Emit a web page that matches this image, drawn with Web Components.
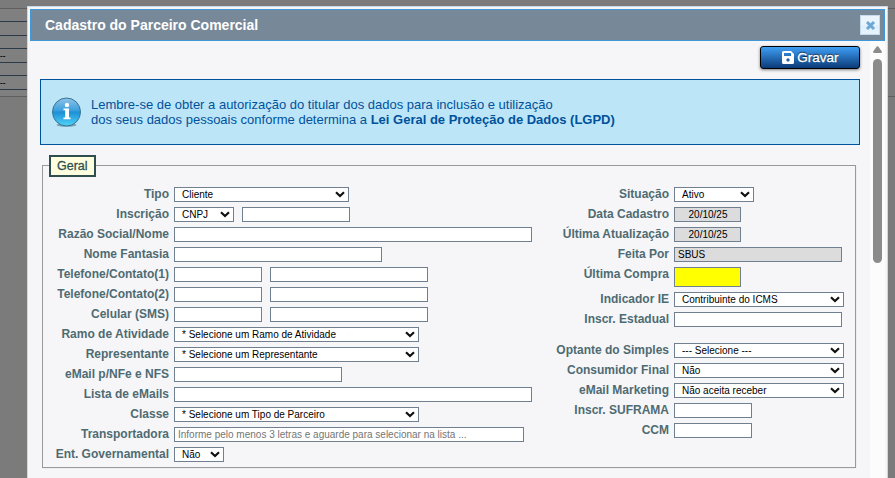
<!DOCTYPE html>
<html lang="pt-BR">
<head>
<meta charset="utf-8">
<title>Cadastro do Parceiro Comercial</title>
<style>
  body {
    margin: 0;
    height: 478px;
    overflow: hidden;
    font-family: "Liberation Sans", Arial, sans-serif;
    background: #7b7b7b;
  }
</style>
</head>
<body>
<script>
/********************************* PageBackdrop ******************************************/
const backdropTemplate = document.createElement('template');
backdropTemplate.innerHTML = `
  <style>
    :host { display: block; position: relative; height: 478px; overflow: hidden; background: #7b7b7b; }
    .rows { padding-top: 8px; }
    .row { box-sizing: border-box; width: 27px; border-top: 1px solid #2b3a46; background: #808080; color: #000; font-size: 8px; font-weight: bold; line-height: 13px; }
    .edge { width: auto; border-color: #5f5f5f; }
    .first { background: linear-gradient(90deg, #808080 27px, #7b7b7b 27px); }
    .last { background: none; }
    ::slotted(*) { position: absolute; left: 27px; top: 6px; }
  </style>
  <div class="rows">
    <div class="row edge first" style="height:13px"></div>
    <div class="row" style="height:14px"></div>
    <div class="row" style="height:13px"></div>
    <div class="row" style="height:14px">--</div>
    <div class="row" style="height:13px"></div>
    <div class="row" style="height:14px">--</div>
    <div class="row" style="height:7px"></div>
    <div class="row edge last" style="height:4px"></div>
  </div>
  <slot></slot>`;
class PageBackdrop extends HTMLElement {
  constructor() {
    super();
    this.attachShadow({ mode: 'open' });
    this.shadowRoot.appendChild(backdropTemplate.content.cloneNode(true));
  }
}
customElements.define('page-backdrop', PageBackdrop);

/********************************* ModalDialog ******************************************/
const dialogTemplate = document.createElement('template');
dialogTemplate.innerHTML = `
  <style>
    :host { display: flex; flex-direction: column; box-sizing: border-box; width: 861px; height: 490px; padding: 2px; border: 1px solid #c5dbec; background: #f6f6f8; }
    header { display: flex; align-items: center; justify-content: space-between; box-sizing: border-box; flex: none; height: 32px; padding: 0 4px 0 14px; border: 1px solid #4297d7; background: #778899; }
    .title { color: #fff; font-size: 14px; font-weight: bold; white-space: nowrap; line-height: 30px; }
    .close { display: flex; box-sizing: border-box; width: 20px; height: 20px; border: 1px solid #c5dbec; background: linear-gradient(#eaf4fd 50%, #dfeffc 50%, #e6f3fc); }
    main { display: flex; flex: 1; min-height: 0; }
    .content { box-sizing: border-box; width: 840px; padding: 5px 10px 0; }
    .bar { display: flex; flex-direction: column; align-items: center; width: 15px; padding-top: 5px; box-sizing: border-box; background: #fcfcfc; }
    .thumb { width: 9px; height: 204px; margin-top: 6px; border-radius: 5px; background: #8b8b8b; }
  </style>
  <header>
    <span class="title"></span>
    <span class="close">
      <svg width="18" height="18" viewBox="0 0 18 18"><path d="M6 6L13 13M13 6L6 13" stroke="#6da8d5" stroke-width="3"/></svg>
    </span>
  </header>
  <main>
    <div class="content"><slot></slot></div>
    <div class="bar">
      <svg width="9" height="7" viewBox="0 0 9 7"><path d="M3.700 .6Q4.500-.3 5.300.6L8.800 5.500Q9 7 8 7H1Q0 7 .2 5.500Z" fill="#8b8b8b"/></svg>
      <div class="thumb"></div>
    </div>
  </main>`;
class ModalDialog extends HTMLElement {
  constructor() {
    super();
    this.attachShadow({ mode: 'open' });
    this.shadowRoot.appendChild(dialogTemplate.content.cloneNode(true));
  }

  connectedCallback() {
    this.shadowRoot.querySelector('.title').textContent = this.getAttribute('heading');
  }
}
customElements.define('modal-dialog', ModalDialog);

/********************************* SaveButton ******************************************/
const saveTemplate = document.createElement('template');
saveTemplate.innerHTML = `
  <style>
    :host { display: flex; justify-content: flex-end; }
    button { display: flex; align-items: center; justify-content: center; gap: 4px; box-sizing: border-box; width: 100px; height: 23px; padding: 0; border: 1px solid #000; border-radius: 3px; background: linear-gradient(#3f9ff5, #0a3a78); box-shadow: 0 1px 3px rgba(0, 0, 0, .5); color: #fff; font: 13.500px/20px "Liberation Sans", Arial, sans-serif; -webkit-text-stroke: .3px #fff; text-shadow: 0 -1px 1px rgba(0, 0, 0, .8); }
    svg { display: block; margin: -1px -1px 0 1px; }
  </style>
  <button>
    <svg width="12" height="13" viewBox="0 0 12 13"><path fill="#fff" fill-rule="evenodd" d="M1.500 0H9L12 3V11.500Q12 13 10.500 13H1.500Q0 13 0 11.500V1.500Q0 0 1.500 0ZM2 2V5H9V2ZM6 7.200A1.700 1.700 0 1 0 6 10.600A1.700 1.700 0 1 0 6 7.200Z"/></svg>
    <span><slot></slot></span>
  </button>`;
class SaveButton extends HTMLElement {
  constructor() {
    super();
    this.attachShadow({ mode: 'open' });
    this.shadowRoot.appendChild(saveTemplate.content.cloneNode(true));
  }
}
customElements.define('save-button', SaveButton);

/********************************* InfoBox ******************************************/
const infoTemplate = document.createElement('template');
infoTemplate.innerHTML = `
  <style>
    :host { display: flex; align-items: center; gap: 9px; box-sizing: border-box; height: 66px; margin-top: 10px; padding: 0 11px; border: 1px solid #00529b; background: #bde5f8; color: #00529b; font-size: 13px; line-height: 15px; white-space: nowrap; }
    svg { flex: none; }
  </style>
  <svg width="30" height="30" viewBox="0 0 30 30">
    <defs>
      <linearGradient id="ball" x2="0" y2="1"><stop stop-color="#8fc4ea"/><stop offset=".45" stop-color="#3a9fdc"/><stop offset=".5" stop-color="#1e8fd6"/><stop offset="1" stop-color="#4fd4f8"/></linearGradient>
    </defs>
    <ellipse cx="14.500" cy="28" rx="10" ry="1.800" fill="#5f8596" opacity=".7"/>
    <circle cx="14.500" cy="15" r="14" fill="url(#ball)" stroke="#36758f"/>
    <circle cx="15" cy="8" r="2.200" fill="#fff"/>
    <path d="M11.500 11.500H17V20.500H18.500V22.300H11.500V20.500H13.200V13.200H11.500Z" fill="#fff"/>
  </svg>
  <div><slot></slot></div>`;
class InfoBox extends HTMLElement {
  constructor() {
    super();
    this.attachShadow({ mode: 'open' });
    this.shadowRoot.appendChild(infoTemplate.content.cloneNode(true));
  }
}
customElements.define('info-box', InfoBox);

/********************************* FieldGroup ******************************************/
const groupTemplate = document.createElement('template');
groupTemplate.innerHTML = `
  <style>
    :host { display: block; margin: 10px 4px 0 2px; }
    fieldset { box-sizing: border-box; height: 313px; margin: 0; padding: 0 0 0 6px; border: 1px solid #999; box-shadow: 1px 1px #eee; }
    legend { box-sizing: border-box; width: 47px; height: 21.5px; padding: 0 0 0 6px; border: 2px solid #2f4f4f; background: #ffffe0; color: #2f4f4f; font-size: 12.500px; line-height: 18px; white-space: nowrap; -webkit-text-stroke: .3px; }
    .columns { display: grid; grid-template-columns: 500px 1fr; margin-left: -1px; padding-top: 8.5px; }
  </style>
  <fieldset>
    <legend></legend>
    <div class="columns"><slot></slot></div>
  </fieldset>`;
class FieldGroup extends HTMLElement {
  constructor() {
    super();
    this.attachShadow({ mode: 'open' });
    this.shadowRoot.appendChild(groupTemplate.content.cloneNode(true));
  }

  connectedCallback() {
    this.shadowRoot.querySelector('legend').textContent = this.getAttribute('legend');
  }
}
customElements.define('field-group', FieldGroup);

/********************************* FieldRow ******************************************/
const rowTemplate = document.createElement('template');
rowTemplate.innerHTML = `
  <style>
    :host { display: flex; height: 20px; }
    :host([tall]) { height: 25px; }
    :host([spaced]) { margin-top: 11px; }
    label { width: 121px; margin-right: 5px; color: #4f6b72; font-size: 12px; font-weight: bold; line-height: 18px; text-align: right; white-space: nowrap; }
    .fields { display: flex; align-items: flex-start; gap: 8px; padding-top: 2px; }
  </style>
  <label></label>
  <div class="fields"><slot></slot></div>`;
class FieldRow extends HTMLElement {
  constructor() {
    super();
    this.attachShadow({ mode: 'open' });
    this.shadowRoot.appendChild(rowTemplate.content.cloneNode(true));
  }

  connectedCallback() {
    this.shadowRoot.querySelector('label').textContent = this.getAttribute('label');
  }
}
customElements.define('field-row', FieldRow);

/********************************* TextField ******************************************/
const textTemplate = document.createElement('template');
textTemplate.innerHTML = `
  <style>
    :host { display: block; box-sizing: border-box; height: 15px; padding-left: 3px; border: 1px solid #708090; background: #fff; color: #000; font-size: 10px; line-height: 14px; white-space: nowrap; }
    :host([hint]) { color: #757575; }
    :host([readonly]) { background: #dcdcdc; }
    :host([centered]) { padding-left: 1px; text-align: center; }
    :host([warn]) { height: 20px; background: #ff0; }
  </style>
  <slot></slot>`;
class TextField extends HTMLElement {
  constructor() {
    super();
    this.attachShadow({ mode: 'open' });
    this.shadowRoot.appendChild(textTemplate.content.cloneNode(true));
  }

  connectedCallback() {
    this.style.width = this.getAttribute('width') + 'px';
  }
}
customElements.define('text-field', TextField);

/********************************* SelectField ******************************************/
const selectTemplate = document.createElement('template');
selectTemplate.innerHTML = `
  <style>
    :host { display: flex; justify-content: space-between; box-sizing: border-box; height: 15px; padding: 0 3px 0 7px; border: 1px solid #708090; background: #fff; color: #000; font-size: 10px; line-height: 14px; white-space: nowrap; }
    svg { margin-top: 3px; }
  </style>
  <span><slot></slot></span>
  <svg width="10" height="7" viewBox="0 0 10 7"><path d="M1 1.300L5 5L9 1.300" fill="none" stroke="#101010" stroke-width="2.200"/></svg>`;
class SelectField extends HTMLElement {
  constructor() {
    super();
    this.attachShadow({ mode: 'open' });
    this.shadowRoot.appendChild(selectTemplate.content.cloneNode(true));
  }

  connectedCallback() {
    this.style.width = this.getAttribute('width') + 'px';
  }
}
customElements.define('select-field', SelectField);
</script>

<page-backdrop>
  <modal-dialog heading="Cadastro do Parceiro Comercial">
    <save-button>Gravar</save-button>
    <info-box>Lembre-se de obter a autorização do titular dos dados para inclusão e utilização<br>dos seus dados pessoais conforme determina a <b>Lei Geral de Proteção de Dados (LGPD)</b></info-box>
    <field-group legend="Geral">
      <div>
        <field-row label="Tipo"><select-field width="175">Cliente</select-field></field-row>
        <field-row label="Inscrição"><select-field width="60">CNPJ</select-field><text-field width="108"></text-field></field-row>
        <field-row label="Razão Social/Nome"><text-field width="358"></text-field></field-row>
        <field-row label="Nome Fantasia"><text-field width="208"></text-field></field-row>
        <field-row label="Telefone/Contato(1)"><text-field width="88"></text-field><text-field width="158"></text-field></field-row>
        <field-row label="Telefone/Contato(2)"><text-field width="88"></text-field><text-field width="158"></text-field></field-row>
        <field-row label="Celular (SMS)"><text-field width="88"></text-field><text-field width="158"></text-field></field-row>
        <field-row label="Ramo de Atividade"><select-field width="245">* Selecione um Ramo de Atividade</select-field></field-row>
        <field-row label="Representante"><select-field width="245">* Selecione um Representante</select-field></field-row>
        <field-row label="eMail p/NFe e NFS"><text-field width="168"></text-field></field-row>
        <field-row label="Lista de eMails"><text-field width="358"></text-field></field-row>
        <field-row label="Classe"><select-field width="245">* Selecione um Tipo de Parceiro</select-field></field-row>
        <field-row label="Transportadora"><text-field width="350" hint>Informe pelo menos 3 letras e aguarde para selecionar na lista ...</text-field></field-row>
        <field-row label="Ent. Governamental"><select-field width="50">Não</select-field></field-row>
      </div>
      <div>
        <field-row label="Situação"><select-field width="80">Ativo</select-field></field-row>
        <field-row label="Data Cadastro"><text-field width="67" readonly centered>20/10/25</text-field></field-row>
        <field-row label="Última Atualização"><text-field width="67" readonly centered>20/10/25</text-field></field-row>
        <field-row label="Feita Por"><text-field width="168" readonly>SBUS</text-field></field-row>
        <field-row label="Última Compra" tall><text-field width="67" warn></text-field></field-row>
        <field-row label="Indicador IE"><select-field width="170">Contribuinte do ICMS</select-field></field-row>
        <field-row label="Inscr. Estadual"><text-field width="168"></text-field></field-row>
        <field-row label="Optante do Simples" spaced><select-field width="170">--- Selecione ---</select-field></field-row>
        <field-row label="Consumidor Final"><select-field width="170">Não</select-field></field-row>
        <field-row label="eMail Marketing"><select-field width="170">Não aceita receber</select-field></field-row>
        <field-row label="Inscr. SUFRAMA"><text-field width="78"></text-field></field-row>
        <field-row label="CCM"><text-field width="78"></text-field></field-row>
      </div>
    </field-group>
  </modal-dialog>
</page-backdrop>
</body>
</html>
